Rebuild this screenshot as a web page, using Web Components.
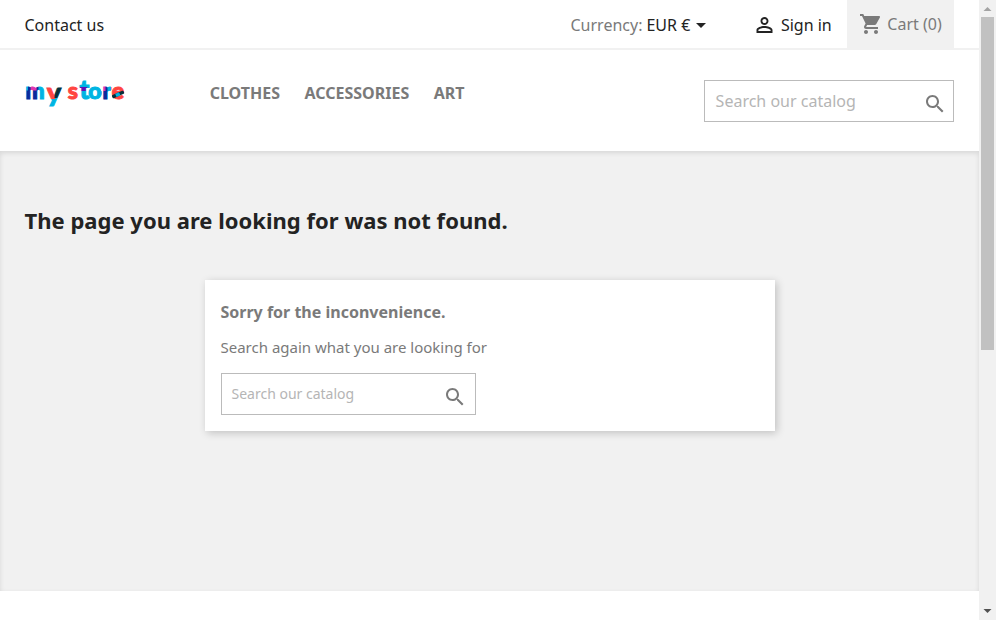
<!DOCTYPE html>
<html lang="en">
<head>
<meta charset="utf-8">
<title>My store</title>
<style>
html,body{margin:0;height:100%;overflow:hidden;background:#fff}
body{font-family:"Noto Sans",sans-serif;color:#7a7a7a}
</style>
</head>
<body>
<store-page></store-page>
<script>
function define(name, html){
  const t=document.createElement('template');
  t.innerHTML=html;
  customElements.define(name, class extends HTMLElement{
    constructor(){super();this.attachShadow({mode:'open'}).append(t.content.cloneNode(true));}
  });
}

define('icon-search', `<style>:host{display:block;width:24px;height:24px;color:#7a7a7a}svg{display:block}</style>
<svg width="24" height="24" viewBox="0 0 24 24" fill="currentColor"><path d="M15.5 14h-.79l-.28-.27C15.41 12.59 16 11.11 16 9.5 16 5.91 13.09 3 9.5 3S3 5.91 3 9.5 5.91 16 9.5 16c1.61 0 3.09-.59 4.23-1.57l.27.28v.79l5 4.99L20.49 19l-4.99-5zm-6 0C7.01 14 5 11.99 5 9.5S7.01 5 9.5 5 14 7.01 14 9.5 11.99 14 9.5 14z"/></svg>`);

define('icon-person', `<style>:host{display:block;width:24px;height:24px}svg{display:block}</style>
<svg width="24" height="24" viewBox="-.5 0 24 24" fill="currentColor"><path d="M12 5.9c1.16 0 2.1.94 2.1 2.1s-.94 2.1-2.1 2.1S9.9 9.16 9.9 8s.94-2.1 2.1-2.1m0 9c2.97 0 6.1 1.46 6.1 2.1v1.1H5.9V17c0-.64 3.13-2.1 6.1-2.1M12 4C9.79 4 8 5.79 8 8s1.79 4 4 4 4-1.79 4-4-1.79-4-4-4zm0 9c-2.67 0-8 1.34-8 4v3h16v-3c0-2.66-5.33-4-8-4z"/></svg>`);

define('icon-cart', `<style>:host{display:block;width:24px;height:24px}svg{display:block}</style>
<svg width="24" height="24" viewBox="0 0 24 24" fill="currentColor"><path d="M7 18c-1.1 0-1.99.9-1.99 2S5.9 22 7 22s2-.9 2-2-.9-2-2-2zM1 2v2h2l3.6 7.59-1.35 2.45c-.16.28-.25.61-.25.96 0 1.1.9 2 2 2h12v-2H7.42c-.14 0-.25-.11-.25-.25l.03-.12.9-1.63h7.45c.75 0 1.41-.41 1.75-1.03l3.58-6.49c.08-.14.12-.31.12-.48 0-.55-.45-1-1-1H5.21l-.94-2H1zm16 16c-1.1 0-1.99.9-1.99 2s.89 2 1.99 2 2-.9 2-2-.9-2-2-2z"/></svg>`);

define('store-logo', `<style>:host{display:block;width:104px;height:50px}svg{display:block;overflow:visible}text{font:900 23px Lato,sans-serif}</style>
<svg width="104" height="50" viewBox="22 69 104 50">
<defs>
<pattern id="paint" patternUnits="userSpaceOnUse" x="20" y="65" width="120" height="60">
<g transform="translate(-20 -65)">
<rect x="20" y="65" width="120" height="60" fill="#00b4e2"/>
<rect x="28" y="85" width="10.5" height="16" fill="#0b2a9c"/>
<rect x="26.5" y="90.5" width="4" height="12" fill="#0b2a9c"/>
<rect x="30.6" y="84" width="6" height="6.5" fill="#df35ae"/>
<path d="M46.5 84H56V97L55 99H46.5Z" fill="#ff4541"/>
<path d="M55.4 84H62.5V93L59.5 98H54.5Z" fill="#052f3a"/>
<rect x="66" y="84" width="13.2" height="20" fill="#ff4541"/>
<rect x="79.2" y="87" width="8" height="4" fill="#5a13b5"/>
<rect x="101" y="86" width="6.5" height="16" fill="#0b2a9c"/>
<rect x="101" y="85" width="4.5" height="6" fill="#df35ae"/>
<rect x="111" y="84" width="20" height="20" fill="#ff4541"/>
</g></pattern>
</defs>
<text y="99.3" xml:space="preserve" fill="url(#paint)" stroke="url(#paint)" stroke-width="1"><tspan x="25.3">m</tspan><tspan x="46.8" y="101.5" font-size="27">y</tspan><tspan y="99.3"> </tspan><tspan x="67.7">s</tspan><tspan x="79.4" font-size="26">t</tspan><tspan x="88.2">o</tspan><tspan x="102.6">r</tspan><tspan x="111.7">e</tspan></text>
<g transform="rotate(-24 118 94.5)"><rect x="111.8" y="92.8" width="12.6" height="3.4" rx="1" fill="#052f3a"/><rect x="115.7" y="92.8" width="4.2" height="3.4" fill="#00b4e2"/></g>
</svg>`);

define('search-box', `<style>
:host{display:flex;align-items:center;justify-content:space-between;box-sizing:border-box;height:42px;border:1px solid #bbb;background:#fff;padding:5px var(--end,7px) 0 var(--inset,10px);color:#b5b5b5}
span{line-height:22px;margin-top:-6px}</style>
<span><slot></slot></span><icon-search></icon-search>`);

define('top-bar', `<style>
:host{display:flex;align-items:center;box-sizing:border-box;height:50px;border-bottom:2px solid #f1f1f1;padding:0 25px 0 24.5px;font-size:16px;line-height:24px;color:#232323}
.contact,.cur{padding-top:2px}
.cur{margin-left:auto;display:flex;align-items:center}
.cur b{font-weight:400;color:#7a7a7a;margin-right:4px}
.cur i{border:5px solid transparent;border-top-color:#232323;border-bottom:0;margin-left:5.5px}
.sign{display:flex;align-items:center;gap:4.5px;margin:2px 15.3px 0 46.6px}
.cart{display:flex;align-items:center;gap:4.8px;box-sizing:border-box;width:107px;height:48px;padding:0 0 0 11.5px;background:#f1f1f1;color:#7a7a7a}
</style>
<span class="contact">Contact us</span>
<div class="cur"><b>Currency:</b><span>EUR €</span><i></i></div>
<div class="sign"><icon-person></icon-person><span>Sign in</span></div>
<div class="cart"><icon-cart></icon-cart><span>Cart (0)</span></div>`);

define('main-header', `<style>
:host{display:flex;align-items:flex-start;box-sizing:border-box;height:101px;padding:30px 25px 0 22px}
store-logo{margin-top:-11px}
nav{display:flex;gap:24.5px;margin-left:83.7px;font-size:16px;line-height:26px;font-weight:700;color:#7a7a7a}
search-box{width:250px;margin-left:auto;font-size:16px;--inset:10.6px;--end:6.5px}
</style>
<store-logo></store-logo>
<nav><span>CLOTHES</span><span>ACCESSORIES</span><span>ART</span></nav>
<search-box>Search our catalog</search-box>`);

define('not-found', `<style>
:host{display:block;box-sizing:border-box;height:440px;padding:52px 25px 0 24.5px;background:#f1f1f1;box-shadow:inset 0 2px 5px 0 rgba(0,0,0,.11)}
h1{margin:0;font-size:22px;line-height:34px;font-weight:700;color:#232323;letter-spacing:.015px}
section{box-sizing:border-box;width:570px;height:151px;margin:43px 0 0 180.5px;background:#fff;box-shadow:2px 2px 8px 0 rgba(0,0,0,.2);padding:20px 15.5px}
h2{margin:0;font-size:16px;line-height:24px;font-weight:700}
p{margin:12px 0 14px;font-size:15px;line-height:23px}
search-box{width:255px;margin-left:.5px;font-size:14px;--inset:9.5px;--end:7.6px}
</style>
<h1>The page you are looking for was not found.</h1>
<section><h2>Sorry for the inconvenience.</h2><p>Search again what you are looking for</p><search-box>Search our catalog</search-box></section>`);

define('scroll-bar', `<style>
:host{display:flex;flex-direction:column;align-items:center;box-sizing:border-box;width:17px;height:620px;background:#f1f1f1}
svg{display:block;flex:none}
div{width:13px;height:333px;background:#c1c1c1;margin-bottom:auto}
</style>
<svg width="17" height="17"><path d="M4.5 11L8.5 7L12.5 11Z" fill="#a3a3a3"/></svg><div></div><svg width="17" height="17"><path d="M4.5 6L8.5 10L12.5 6Z" fill="#505050"/></svg>`);

define('store-page', `<style>:host{display:flex;height:620px}main{flex:1;min-width:0}</style>
<main><top-bar></top-bar><main-header></main-header><not-found></not-found></main><scroll-bar></scroll-bar>`);
</script>
</body>
</html>
